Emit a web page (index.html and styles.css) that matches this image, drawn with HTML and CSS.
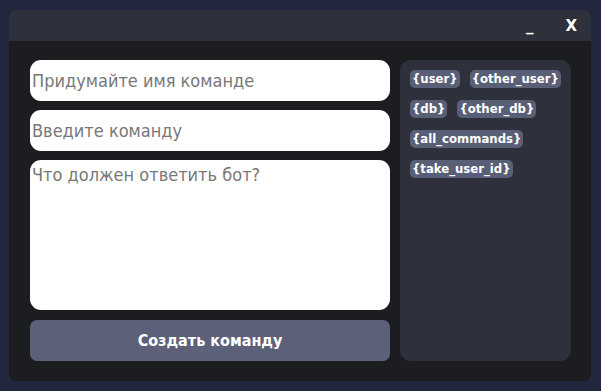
FILE: index.html
```html
<!DOCTYPE html>
<html lang="ru">
<head>
    <meta charset="UTF-8">
    <meta name="viewport" content="width=device-width, initial-scale=1.0">
    <title>Создать команду</title>
    <link rel="stylesheet" href="styles.css">
</head>
<body>
    <div class="window">
        <div class="titlebar">
            <button class="title-btn minimize">_</button>
            <button class="title-btn close">X</button>
        </div>
        <div class="content">
            <form class="command-form">
                <input type="text" class="field" placeholder="Придумайте имя команде">
                <input type="text" class="field" placeholder="Введите команду">
                <textarea class="field answer" placeholder="Что должен ответить бот?"></textarea>
                <button type="submit" class="create-btn">Создать команду</button>
            </form>
            <div class="vars">
                <span class="tag">{user}</span>
                <span class="tag">{other_user}</span>
                <span class="tag">{db}</span>
                <span class="tag">{other_db}</span>
                <span class="tag">{all_commands}</span>
                <span class="tag">{take_user_id}</span>
            </div>
        </div>
    </div>
</body>
</html>
```

FILE: styles.css
```css
* {
    box-sizing: border-box;
    margin: 0;
    padding: 0;
}

body {
    background: #22273d;
    font-family: 'DejaVu Sans', Verdana, sans-serif;
    padding: 10px 10px 10px 9px;
}

.window {
    width: 582px;
    height: 371px;
    border-radius: 7px;
    background: #1c1d21;
    overflow: hidden;
    display: flex;
    flex-direction: column;
}

.titlebar {
    height: 31px;
    background: #2e313b;
    display: flex;
    justify-content: flex-end;
    align-items: center;
    padding-right: 14px;
}

.title-btn {
    background: none;
    border: none;
    color: #ffffff;
    font-family: 'DejaVu Sans', Verdana, sans-serif;
    font-weight: bold;
    font-size: 15px;
    cursor: pointer;
}

.minimize {
    margin-right: 32px;
}

.content {
    flex: 1;
    display: flex;
    gap: 10px;
    padding: 19px 20px 20px 21px;
}

.command-form {
    width: 360px;
    display: flex;
    flex-direction: column;
    gap: 9px;
}

.field {
    height: 41px;
    border: none;
    border-radius: 11px;
    background: #ffffff;
    padding: 0 2px;
    font-family: 'DejaVu Sans', Verdana, sans-serif;
    font-stretch: condensed;
    font-size: 18px;
    color: #333;
    outline: none;
}

.field::placeholder {
    color: #777777;
}

.answer {
    height: 150px;
    padding-top: 4px;
    resize: none;
}

.create-btn {
    height: 41px;
    margin-top: 1px;
    border: none;
    border-radius: 7px;
    background: #5c6179;
    color: #ffffff;
    font-family: 'DejaVu Sans', sans-serif;
    font-stretch: condensed;
    font-weight: bold;
    font-size: 16px;
    cursor: pointer;
}

.vars {
    flex: 1;
    background: #2e313b;
    border-radius: 11px;
    padding: 10px;
    display: flex;
    flex-wrap: wrap;
    align-content: flex-start;
    gap: 12px 10px;
}

.tag {
    background: #5a5f78;
    color: #ffffff;
    font-stretch: condensed;
    font-weight: bold;
    font-size: 13px;
    line-height: 18px;
    height: 18px;
    padding: 0 2px;
    border-radius: 5px;
}
```
